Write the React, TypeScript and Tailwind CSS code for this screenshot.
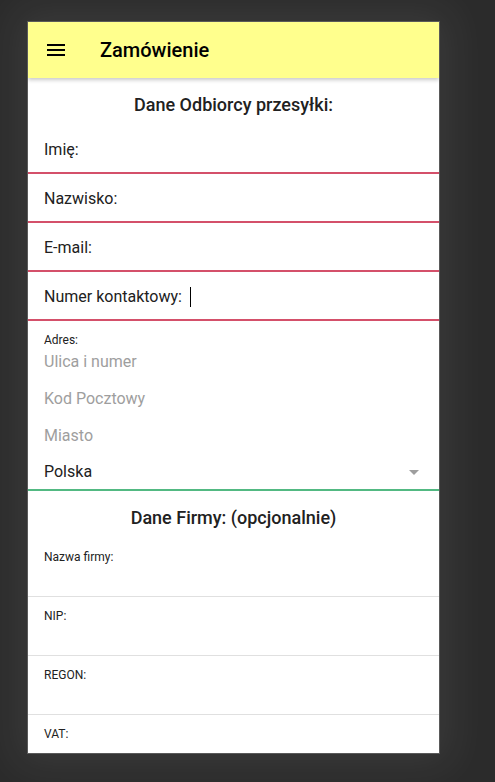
import { ReactNode } from "react";

const font = { fontFamily: "Roboto, 'Noto Sans', sans-serif" };

function RequiredRow({ label, caret }: { label: string; caret?: boolean }) {
  return (
    <div className="h-[49px] px-4 pt-[13px] border-b-2 border-[#d4506a]">
      <div className="flex items-center text-base leading-6 text-[#212121]">
        {label}
        {caret && <span className="ml-2 w-px h-5 bg-black" />}
      </div>
    </div>
  );
}

function OptionalRow({ label, last }: { label: string; last?: boolean }) {
  return (
    <div
      className={`h-[59px] shrink-0 px-4 pt-[11px] ${last ? "" : "border-b border-[#e0e0e0]"}`}
    >
      <div className="text-xs leading-4 text-[#222]">{label}</div>
    </div>
  );
}

function Heading({ children }: { children: ReactNode }) {
  return (
    <div className="h-[47px] shrink-0 pt-[14px] text-center text-lg font-medium leading-[26px] text-[#212121]">
      {children}
    </div>
  );
}

function Placeholder({ text }: { text: string }) {
  return (
    <div className="h-[37px] px-4 pt-[2px] text-base leading-6 text-[#9e9e9e]">{text}</div>
  );
}

export default function App() {
  return (
    <div className="min-h-[782px] bg-[#2b2b2b] pt-[21px] pl-[27px]" style={font}>
      <div className="w-[413px] h-[733px] border border-[#5a5a5a] bg-white shadow-[0_0_40px_12px_rgba(255,255,255,0.07)] flex flex-col overflow-hidden">
        {/* App bar */}
        <header className="relative z-10 h-14 shrink-0 bg-[#ffff8d] flex items-center px-4 shadow-[0_2px_4px_rgba(0,0,0,0.22)]">
          <svg width="24" height="24" viewBox="0 0 24 24" className="shrink-0">
            <path d="M3 18h18v-2H3v2zm0-5h18v-2H3v2zm0-7v2h18V6H3z" fill="#000" />
          </svg>
          <h1 className="ml-8 text-xl font-medium text-black">Zamówienie</h1>
        </header>

        <div className="flex flex-col">
          <Heading>Dane Odbiorcy przesyłki:</Heading>
          <RequiredRow label="Imię:" />
          <RequiredRow label="Nazwisko:" />
          <RequiredRow label="E-mail:" />
          <RequiredRow label="Numer kontaktowy:" caret />

          {/* Address */}
          <div className="border-b-2 border-[#52b982]">
            <div className="h-[27px] px-4 pt-[11px] text-xs leading-4 text-[#222]">Adres:</div>
            <Placeholder text="Ulica i numer" />
            <Placeholder text="Kod Pocztowy" />
            <Placeholder text="Miasto" />
            <div className="h-[30px] px-4 pt-px flex items-start justify-between">
              <span className="text-base leading-6 text-[#212121]">Polska</span>
              <svg width="10" height="5" viewBox="0 0 10 5" className="mt-[10px] mr-1">
                <path d="M0 0h10L5 5z" fill="#9e9e9e" />
              </svg>
            </div>
          </div>

          <Heading>Dane Firmy: (opcjonalnie)</Heading>
          <OptionalRow label="Nazwa firmy:" />
          <OptionalRow label="NIP:" />
          <OptionalRow label="REGON:" />
          <OptionalRow label="VAT:" last />
        </div>
      </div>
    </div>
  );
}
